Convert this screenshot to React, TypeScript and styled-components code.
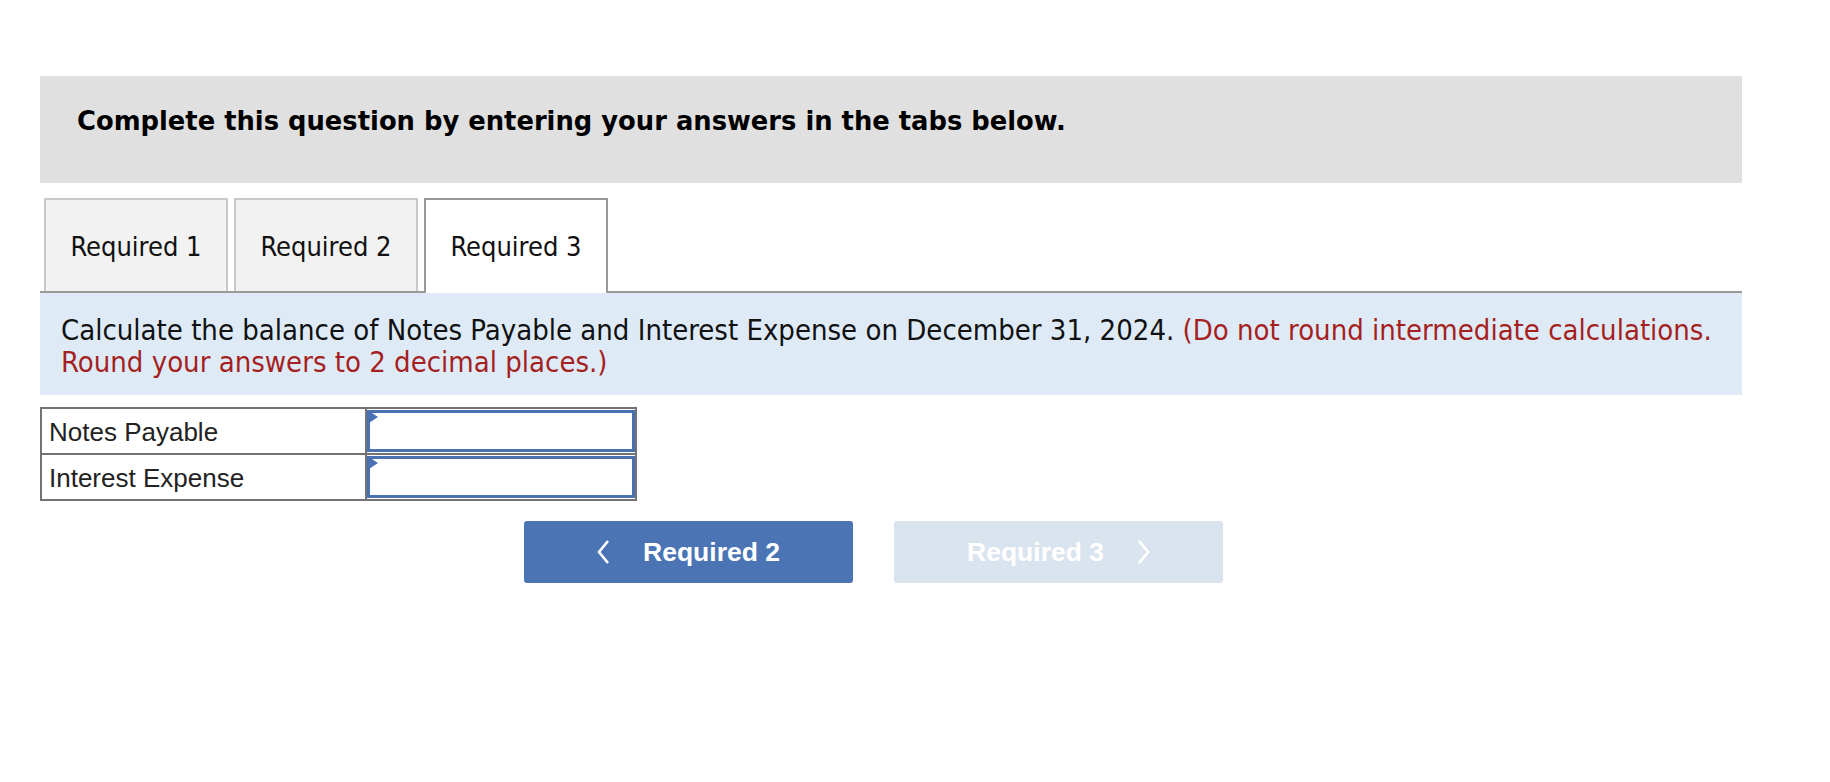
import React from 'react';
import styled, { createGlobalStyle } from 'styled-components';

const GlobalStyle = createGlobalStyle`
    body {
        margin: 0;
        background: #fff;
        font-family: "DejaVu Sans", Verdana, sans-serif;
    }
`;

const Page = styled.div`
    width: 1702px;
    padding: 76px 0 0 40px;
`;

const Banner = styled.div`
    height: 107px;
    background: #e0e0e0;
    display: flex;
    align-items: center;
    padding: 0 0 18px 37px;
    box-sizing: border-box;
    font-family: "DejaVu Sans", Verdana, sans-serif;
    font-weight: bold;
    font-size: 25.8px;
    color: #000;
`;

const TabBar = styled.div`
    display: flex;
    gap: 6px;
    margin-top: 15px;
    padding-left: 4px;
    border-bottom: 2px solid #999;
`;

const Tab = styled.div<{ $active?: boolean }>`
    width: 184px;
    box-sizing: border-box;
    display: flex;
    align-items: center;
    justify-content: center;
    padding-top: ${p => (p.$active ? '0' : '2px')};
    font-family: "DejaVu Sans Condensed", "DejaVu Sans", sans-serif;
    font-size: 27px;
    color: #111;
    background: ${p => (p.$active ? '#fff' : '#f2f2f2')};
    border: 2px solid ${p => (p.$active ? '#999' : '#c8c8c8')};
    border-bottom: none;
    margin-bottom: ${p => (p.$active ? '-2px' : '0')};
    height: ${p => (p.$active ? '95px' : '93px')};
`;

const Instructions = styled.div`
    background: #deebf7;
    height: 102px;
    box-sizing: border-box;
    padding: 21px 21px 0;
    font-family: "DejaVu Sans Condensed", "DejaVu Sans", sans-serif;
    font-size: 29px;
    line-height: 32px;
    color: #111;
`;

const Note = styled.span`
    color: #a51f1f;
`;

const AnswerTable = styled.table`
    margin-top: 12px;
    border-collapse: collapse;
    font-family: "Liberation Sans", Arial, sans-serif;
    font-size: 26px;
    color: #222;
`;

const LabelCell = styled.td`
    width: 325px;
    height: 46px;
    box-sizing: border-box;
    padding: 2px 0 0 7px;
    border: 2px solid #737373;
`;

const InputCell = styled.td`
    width: 270px;
    height: 46px;
    box-sizing: border-box;
    padding: 0;
    border: 2px solid #737373;
    position: relative;
`;

const AnswerInput = styled.input`
    display: block;
    width: 100%;
    height: 42px;
    box-sizing: border-box;
    border: 3px solid #4a72b2;
    outline: none;
    background: #fff;
    font-size: 22px;
`;

const Marker = styled.span`
    position: absolute;
    left: 2px;
    top: 2px;
    width: 0;
    height: 0;
    border-top: 6px solid transparent;
    border-bottom: 6px solid transparent;
    border-left: 9px solid #4a72b2;
`;

const NavRow = styled.div`
    display: flex;
    gap: 41px;
    margin: 20px 0 0 484px;
`;

const NavButton = styled.button<{ $disabled?: boolean }>`
    width: 329px;
    height: 62px;
    border: none;
    border-radius: 3px;
    display: flex;
    align-items: center;
    justify-content: center;
    gap: 33px;
    background: ${p => (p.$disabled ? '#dae4ef' : '#4a74b4')};
    color: #fff;
    font-family: "Liberation Sans", Arial, sans-serif;
    font-weight: bold;
    font-size: 26.5px;
    cursor: ${p => (p.$disabled ? 'default' : 'pointer')};
`;

function Chevron({ dir }: { dir: 'left' | 'right' }) {
    const pts = dir === 'left' ? '11,1 2,12 11,23' : '2,1 11,12 2,23';
    return (
        <svg width="13" height="24" viewBox="0 0 13 24">
            <polyline points={pts} fill="none" stroke="#fff" strokeWidth="2.6" />
        </svg>
    );
}

const rows = ['Notes Payable', 'Interest Expense'];

export default function App() {
    return (
        <Page>
            <GlobalStyle />
            <Banner>Complete this question by entering your answers in the tabs below.</Banner>
            <TabBar>
                <Tab>Required 1</Tab>
                <Tab>Required 2</Tab>
                <Tab $active>Required 3</Tab>
            </TabBar>
            <Instructions>
                Calculate the balance of Notes Payable and Interest Expense on December 31, 2024.{' '}
                <Note>(Do not round intermediate calculations. Round your answers to 2 decimal places.)</Note>
            </Instructions>
            <AnswerTable>
                <tbody>
                    {rows.map(label => (
                        <tr key={label}>
                            <LabelCell>{label}</LabelCell>
                            <InputCell>
                                <AnswerInput type="text" aria-label={label} />
                                <Marker />
                            </InputCell>
                        </tr>
                    ))}
                </tbody>
            </AnswerTable>
            <NavRow>
                <NavButton>
                    <Chevron dir="left" />
                    <span>Required 2</span>
                </NavButton>
                <NavButton $disabled>
                    <span>Required 3</span>
                    <Chevron dir="right" />
                </NavButton>
            </NavRow>
        </Page>
    );
}
